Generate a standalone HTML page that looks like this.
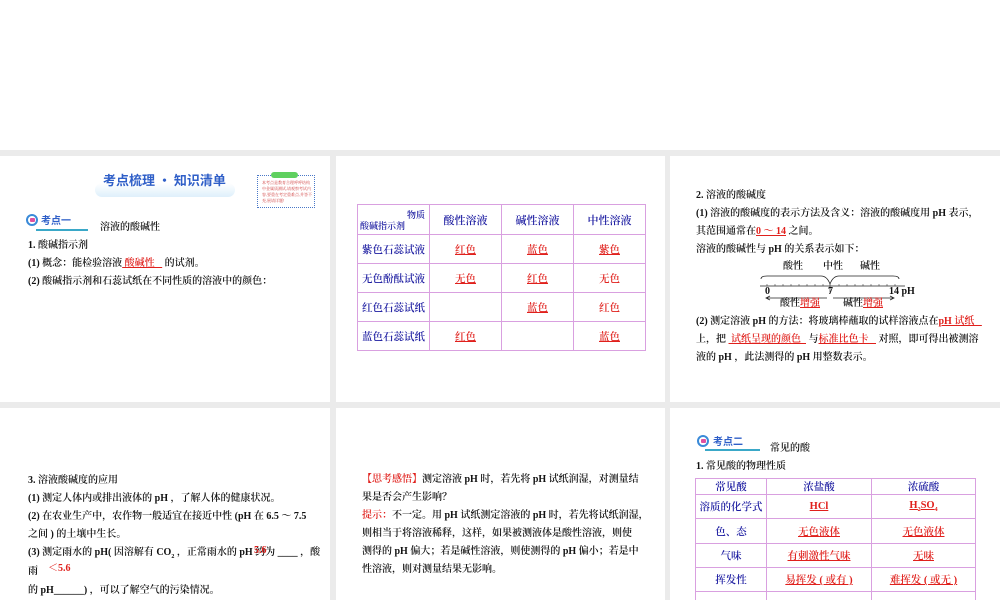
<!DOCTYPE html>
<html style="width:1000px;height:600px;overflow:hidden"><head><meta charset="utf-8"><style>
*{margin:0;padding:0;box-sizing:border-box}
html,body{overflow:hidden}
body{width:1000px;height:600px;background:#fff;position:relative;font-family:"Liberation Serif","Noto Serif CJK SC","Noto Sans CJK SC",serif;font-size:10px;color:#111}
.g{position:absolute;background:#ebebeb}
.t{position:absolute;white-space:nowrap;line-height:12px;font-weight:600}
.r{color:#e0201c;text-decoration:underline}
table{position:absolute;border-collapse:collapse}
td{border:1px solid #d9a0e0;text-align:center;color:#1a1aa0;font-size:10.5px;padding:0;font-weight:600}
td.r{color:#e0201c}
</style></head><body>
<div class="g" style="left:0;top:150px;width:1000px;height:6px"></div>
<div class="g" style="left:0;top:402px;width:1000px;height:6px"></div>
<div class="g" style="left:330px;top:150px;width:6px;height:450px"></div>
<div class="g" style="left:665px;top:150px;width:5px;height:450px"></div>

<!-- panel 1 -->
<div style="position:absolute;left:95px;top:183px;width:140px;height:14px;background:linear-gradient(180deg,#fff,#d6ecfa);border-radius:8px;opacity:.8"></div>
<div class="t" style="left:103px;top:172px;font-size:13px;line-height:16px;font-weight:bold;color:#2f5fc8;font-family:'Noto Sans CJK SC',sans-serif">考点梳理 · 知识清单</div>
<div style="position:absolute;left:257px;top:175px;width:58px;height:33px;border:1px dotted #4a78c8;"></div>
<div style="position:absolute;left:271px;top:172px;width:27px;height:6px;background:#5fd05f;border-radius:3px"></div>
<div style="position:absolute;left:262px;top:180px;font-size:4px;line-height:6px;color:#d04040;width:50px">本考点是教育合理呼呼结构中金属质测试,请观察考试内容,要重在考定重难点,并答不充,展请详题!</div>
<div style="position:absolute;left:26px;top:214px;width:12px;height:12px;border:2px solid #3a8ad8;border-radius:50%;background:#fff"><div style="position:absolute;left:2px;top:2px;width:5px;height:4px;background:#e050a0;border-radius:1px"></div></div>
<div class="t" style="left:41px;top:214px;color:#2f5fc8;font-family:'Noto Sans CJK SC',sans-serif">考点一</div>
<div style="position:absolute;left:36px;top:229px;width:52px;height:2px;background:#3aa8c8"></div>
<div class="t" style="left:100px;top:222px">溶液的酸碱性</div>
<div class="t" style="left:28px;top:240px">1. 酸碱指示剂</div>
<div class="t" style="left:28px;top:258px">(1) 概念：能检验溶液<span class="r">&nbsp;酸碱性&nbsp;&nbsp;&nbsp;</span> 的试剂。</div>
<div class="t" style="left:28px;top:276px">(2) 酸碱指示剂和石蕊试纸在不同性质的溶液中的颜色：</div>

<!-- panel 2 -->
<table style="left:357px;top:204px;width:289px">
<tr style="height:30px"><td style="width:72px;position:relative;font-size:9px"><div style="position:absolute;right:4px;top:3px">物质</div><div style="position:absolute;left:2px;bottom:2px">酸碱指示剂</div></td><td style="width:72px;font-size:11px">酸性溶液</td><td style="width:72px;font-size:11px">碱性溶液</td><td style="font-size:11px">中性溶液</td></tr>
<tr style="height:29px"><td>紫色石蕊试液</td><td class="r">红色</td><td class="r">蓝色</td><td class="r">紫色</td></tr>
<tr style="height:29px"><td>无色酚酞试液</td><td class="r">无色</td><td class="r">红色</td><td class="r" style="text-decoration:none">无色</td></tr>
<tr style="height:29px"><td>红色石蕊试纸</td><td></td><td class="r">蓝色</td><td class="r" style="text-decoration:none">红色</td></tr>
<tr style="height:29px"><td>蓝色石蕊试纸</td><td class="r">红色</td><td></td><td class="r">蓝色</td></tr>
</table>

<!-- panel 3 -->
<div class="t" style="left:696px;top:190px">2. 溶液的酸碱度</div>
<div class="t" style="left:696px;top:208px">(1) 溶液的酸碱度的表示方法及含义：溶液的酸碱度用 pH 表示，</div>
<div class="t" style="left:696px;top:226px">其范围通常在<span class="r">0 ～ 14</span> 之间。</div>
<div class="t" style="left:696px;top:244px">溶液的酸碱性与 pH 的关系表示如下：</div>
<div class="t" style="left:783px;top:261px">酸性</div>
<div class="t" style="left:823px;top:261px">中性</div>
<div class="t" style="left:860px;top:261px">碱性</div>
<svg style="position:absolute;left:755px;top:272px" width="160" height="32">
<path d="M6 7 Q6 4 12 4 L66 4 Q72 4 75 12 Q78 4 84 4 L138 4 Q144 4 144 7" fill="none" stroke="#222" stroke-width="0.8"/>
<line x1="5" y1="14" x2="150" y2="14" stroke="#222" stroke-width="0.8"/>
<g stroke="#222" stroke-width="0.5"><path d="M12 12v2M20 12v2M28 12v2M36 12v2M44 12v2M52 12v2M60 12v2M68 12v2M84 12v2M92 12v2M100 12v2M108 12v2M116 12v2M124 12v2M132 12v2M140 12v2"/></g>
<line x1="75" y1="12" x2="75" y2="20" stroke="#222" stroke-width="0.6"/>
<path d="M72 26 L12 26 M15 24 L11 26 L15 28" fill="none" stroke="#222" stroke-width="0.8"/>
<path d="M78 26 L138 26 M135 24 L139 26 L135 28" fill="none" stroke="#222" stroke-width="0.8"/>
</svg>
<div class="t" style="left:765px;top:286px">0</div>
<div class="t" style="left:828px;top:286px">7</div>
<div class="t" style="left:889px;top:286px">14 pH</div>
<div class="t" style="left:780px;top:298px">酸性<span class="r">增强</span></div>
<div class="t" style="left:843px;top:298px">碱性<span class="r">增强</span></div>
<div class="t" style="left:696px;top:316px">(2) 测定溶液 pH 的方法：将玻璃棒蘸取的试样溶液点在<span class="r">pH 试纸&nbsp;&nbsp;&nbsp;</span></div>
<div class="t" style="left:696px;top:334px">上，把 <span class="r">&nbsp;试纸呈现的颜色&nbsp;&nbsp;</span> 与<span class="r">标准比色卡&nbsp;&nbsp;&nbsp;</span> 对照，即可得出被测溶</div>
<div class="t" style="left:696px;top:352px">液的 pH ，此法测得的 pH 用整数表示。</div>

<!-- panel 4 -->
<div class="t" style="left:28px;top:475px">3. 溶液酸碱度的应用</div>
<div class="t" style="left:28px;top:493px">(1) 测定人体内或排出液体的 pH ，了解人体的健康状况。</div>
<div class="t" style="left:28px;top:511px">(2) 在农业生产中，农作物一般适宜在接近中性 (pH 在 6.5 ～ 7.5</div>
<div class="t" style="left:28px;top:529px">之间 ) 的土壤中生长。</div>
<div class="t" style="left:28px;top:547px">(3) 测定雨水的 pH( 因溶解有 CO<sub style="font-size:6px">2</sub> ，正常雨水的 pH 约为 ____ ，酸</div>
<div class="t" style="left:254px;top:545px;color:#e0201c">5.6</div>
<div class="t" style="left:28px;top:566px">雨</div>
<div class="t" style="left:48px;top:563px;color:#e0201c">＜5.6</div>
<div class="t" style="left:28px;top:585px">的 pH______) ，可以了解空气的污染情况。</div>

<!-- panel 5 -->
<div class="t" style="left:362px;top:474px"><span style="color:#e0201c">【思考感悟】</span>测定溶液 pH 时，若先将 pH 试纸润湿，对测量结</div>
<div class="t" style="left:362px;top:492px">果是否会产生影响？</div>
<div class="t" style="left:362px;top:510px"><span style="color:#e0201c">提示：</span>不一定。用 pH 试纸测定溶液的 pH 时，若先将试纸润湿，</div>
<div class="t" style="left:362px;top:528px">则相当于将溶液稀释，这样，如果被测液体是酸性溶液，则使</div>
<div class="t" style="left:362px;top:546px">测得的 pH 偏大；若是碱性溶液，则使测得的 pH 偏小；若是中</div>
<div class="t" style="left:362px;top:564px">性溶液，则对测量结果无影响。</div>

<!-- panel 6 -->
<div style="position:absolute;left:697px;top:435px;width:12px;height:12px;border:2px solid #3a8ad8;border-radius:50%;background:#fff"><div style="position:absolute;left:2px;top:2px;width:5px;height:4px;background:#e050a0;border-radius:1px"></div></div>
<div class="t" style="left:713px;top:435px;color:#2f5fc8;font-family:'Noto Sans CJK SC',sans-serif">考点二</div>
<div style="position:absolute;left:705px;top:449px;width:55px;height:2px;background:#3aa8c8"></div>
<div class="t" style="left:770px;top:443px">常见的酸</div>
<div class="t" style="left:696px;top:461px">1. 常见酸的物理性质</div>
<div style="position:absolute;left:0;top:0;width:1000px;height:600px;overflow:hidden;pointer-events:none">
<table style="left:695px;top:478px;width:281px">
<tr style="height:16px"><td style="width:71px">常见酸</td><td style="width:105px">浓盐酸</td><td>浓硫酸</td></tr>
<tr style="height:24px"><td>溶质的化学式</td><td class="r">HCl</td><td class="r">H<sub style="font-size:6px">2</sub>SO<sub style="font-size:6px">4</sub></td></tr>
<tr style="height:25px"><td>色、态</td><td class="r">无色液体</td><td class="r">无色液体</td></tr>
<tr style="height:24px"><td>气味</td><td class="r">有刺激性气味</td><td class="r">无味</td></tr>
<tr style="height:24px"><td>挥发性</td><td class="r">易挥发 ( 或有 )</td><td class="r">难挥发 ( 或无 )</td></tr>
<tr style="height:24px"><td></td><td></td><td></td></tr>
</table>
</div>
</body></html>
